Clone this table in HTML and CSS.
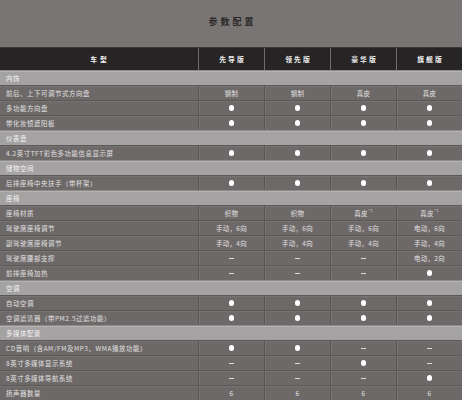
FILE: index.html
```html
<!DOCTYPE html>
<html lang="zh-CN">
<head>
<meta charset="utf-8">
<title>参数配置</title>
<link rel="stylesheet" href="styles.css">
</head>
<body>
<div class="page">
  <h1 class="title">参数配置</h1>
  <div class="table">
    <div class="row head">
      <div class="cell name">车型</div>
      <div class="cell">先导版</div>
      <div class="cell">领先版</div>
      <div class="cell">豪华版</div>
      <div class="cell">旗舰版</div>
    </div>

    <div class="row section"><div class="label">内饰</div></div>
    <div class="row">
      <div class="cell name">前后、上下可调节式方向盘</div>
      <div class="cell">钢制</div><div class="cell">钢制</div><div class="cell">真皮</div><div class="cell">真皮</div>
    </div>
    <div class="row">
      <div class="cell name">多功能方向盘</div>
      <div class="cell"><span class="dot"></span></div><div class="cell"><span class="dot"></span></div><div class="cell"><span class="dot"></span></div><div class="cell"><span class="dot"></span></div>
    </div>
    <div class="row">
      <div class="cell name">带化妆镜遮阳板</div>
      <div class="cell"><span class="dot"></span></div><div class="cell"><span class="dot"></span></div><div class="cell"><span class="dot"></span></div><div class="cell"><span class="dot"></span></div>
    </div>

    <div class="row section"><div class="label">仪表盘</div></div>
    <div class="row">
      <div class="cell name">4.2英寸TFT彩色多功能信息显示屏</div>
      <div class="cell"><span class="dot"></span></div><div class="cell"><span class="dot"></span></div><div class="cell"><span class="dot"></span></div><div class="cell"><span class="dot"></span></div>
    </div>

    <div class="row section"><div class="label">储物空间</div></div>
    <div class="row">
      <div class="cell name">后排座椅中央扶手（带杯架）</div>
      <div class="cell"><span class="dot"></span></div><div class="cell"><span class="dot"></span></div><div class="cell"><span class="dot"></span></div><div class="cell"><span class="dot"></span></div>
    </div>

    <div class="row section"><div class="label">座椅</div></div>
    <div class="row">
      <div class="cell name">座椅材质</div>
      <div class="cell">织物</div><div class="cell">织物</div><div class="cell">真皮<sup>*1</sup></div><div class="cell">真皮<sup>*1</sup></div>
    </div>
    <div class="row">
      <div class="cell name">驾驶席座椅调节</div>
      <div class="cell">手动，6向</div><div class="cell">手动，6向</div><div class="cell">手动，6向</div><div class="cell">电动，6向</div>
    </div>
    <div class="row">
      <div class="cell name">副驾驶席座椅调节</div>
      <div class="cell">手动，4向</div><div class="cell">手动，4向</div><div class="cell">手动，4向</div><div class="cell">手动，4向</div>
    </div>
    <div class="row">
      <div class="cell name">驾驶席腰部支撑</div>
      <div class="cell"><span class="dash"></span></div><div class="cell"><span class="dash"></span></div><div class="cell"><span class="dash"></span></div><div class="cell">电动，2向</div>
    </div>
    <div class="row">
      <div class="cell name">前排座椅加热</div>
      <div class="cell"><span class="dash"></span></div><div class="cell"><span class="dash"></span></div><div class="cell"><span class="dash"></span></div><div class="cell"><span class="dot"></span></div>
    </div>

    <div class="row section"><div class="label">空调</div></div>
    <div class="row">
      <div class="cell name">自动空调</div>
      <div class="cell"><span class="dot"></span></div><div class="cell"><span class="dot"></span></div><div class="cell"><span class="dot"></span></div><div class="cell"><span class="dot"></span></div>
    </div>
    <div class="row">
      <div class="cell name">空调滤清器（带PM2.5过滤功能）</div>
      <div class="cell"><span class="dot"></span></div><div class="cell"><span class="dot"></span></div><div class="cell"><span class="dot"></span></div><div class="cell"><span class="dot"></span></div>
    </div>

    <div class="row section"><div class="label">多媒体配置</div></div>
    <div class="row">
      <div class="cell name">CD音响（含AM/FM及MP3、WMA播放功能）</div>
      <div class="cell"><span class="dot"></span></div><div class="cell"><span class="dot"></span></div><div class="cell"><span class="dash"></span></div><div class="cell"><span class="dash"></span></div>
    </div>
    <div class="row">
      <div class="cell name">8英寸多媒体显示系统</div>
      <div class="cell"><span class="dash"></span></div><div class="cell"><span class="dash"></span></div><div class="cell"><span class="dot"></span></div><div class="cell"><span class="dash"></span></div>
    </div>
    <div class="row">
      <div class="cell name">8英寸多媒体导航系统</div>
      <div class="cell"><span class="dash"></span></div><div class="cell"><span class="dash"></span></div><div class="cell"><span class="dash"></span></div><div class="cell"><span class="dot"></span></div>
    </div>
    <div class="row">
      <div class="cell name">扬声器数量</div>
      <div class="cell">6</div><div class="cell">6</div><div class="cell">6</div><div class="cell">6</div>
    </div>
  </div>
</div>
</body>
</html>
```

FILE: styles.css
```css
html, body {
  margin: 0;
  padding: 0;
  background: #7a7575;
}
body {
  font-family: "Noto Sans CJK SC", "Noto Sans", sans-serif;
  width: 462px;
  height: 400px;
  overflow: hidden;
}
.page {
  display: flex;
  flex-direction: column;
}
.title {
  margin: 0;
  height: 47px;
  display: flex;
  align-items: center;
  justify-content: center;
  font-size: 9px;
  font-weight: 700;
  letter-spacing: 3px;
  color: #2a2828;
  padding-left: 3px;
  padding-bottom: 4px;
  box-sizing: border-box;
}
.table {
  display: flex;
  flex-direction: column;
}
.row {
  display: grid;
  grid-template-columns: 198px repeat(4, 66px);
  height: 15px;
  box-sizing: border-box;
  background: #6d6969;
  border-top: 1px solid #5c5858;
  box-shadow: inset 0 1px 0 #777373;
  color: #e4e2e2;
  font-size: 6.4px;
}
.cell {
  display: flex;
  align-items: center;
  justify-content: center;
  border-left: 1px solid #5a5656;
  box-shadow: inset 1px 0 0 #787474;
  white-space: nowrap;
  letter-spacing: 0.4px;
}
.cell.name {
  justify-content: flex-start;
  padding-left: 6px;
  border-left: none;
  box-shadow: none;
  letter-spacing: 0.6px;
}
.row.head {
  height: 23px;
  background: #262424;
  border-top: 1px solid #3a3838;
  box-shadow: none;
  color: #f2f2f2;
  font-size: 6.8px;
  font-weight: 700;
}
.row.head .cell {
  letter-spacing: 2px;
  border-left: 1px solid #6f6b6b;
  box-shadow: none;
  padding-left: 2px;
}
.row.head .cell.name {
  justify-content: center;
  border-left: none;
  letter-spacing: 3px;
}
.row.section {
  display: flex;
  align-items: center;
  background: #a4a2a2;
  border-top: 1px solid #8e8a8a;
  box-shadow: inset 0 1px 0 #b4b2b2;
  color: #f4f4f4;
}
.label {
  padding-left: 6px;
  letter-spacing: 0.6px;
}
.dot {
  width: 5.5px;
  height: 5.5px;
  border-radius: 50%;
  background: #ffffff;
}
.dash {
  width: 5px;
  height: 1px;
  background: #dcdada;
}
sup {
  font-size: 3.5px;
  align-self: flex-start;
  margin-top: 2px;
  margin-left: 0.5px;
}
```
